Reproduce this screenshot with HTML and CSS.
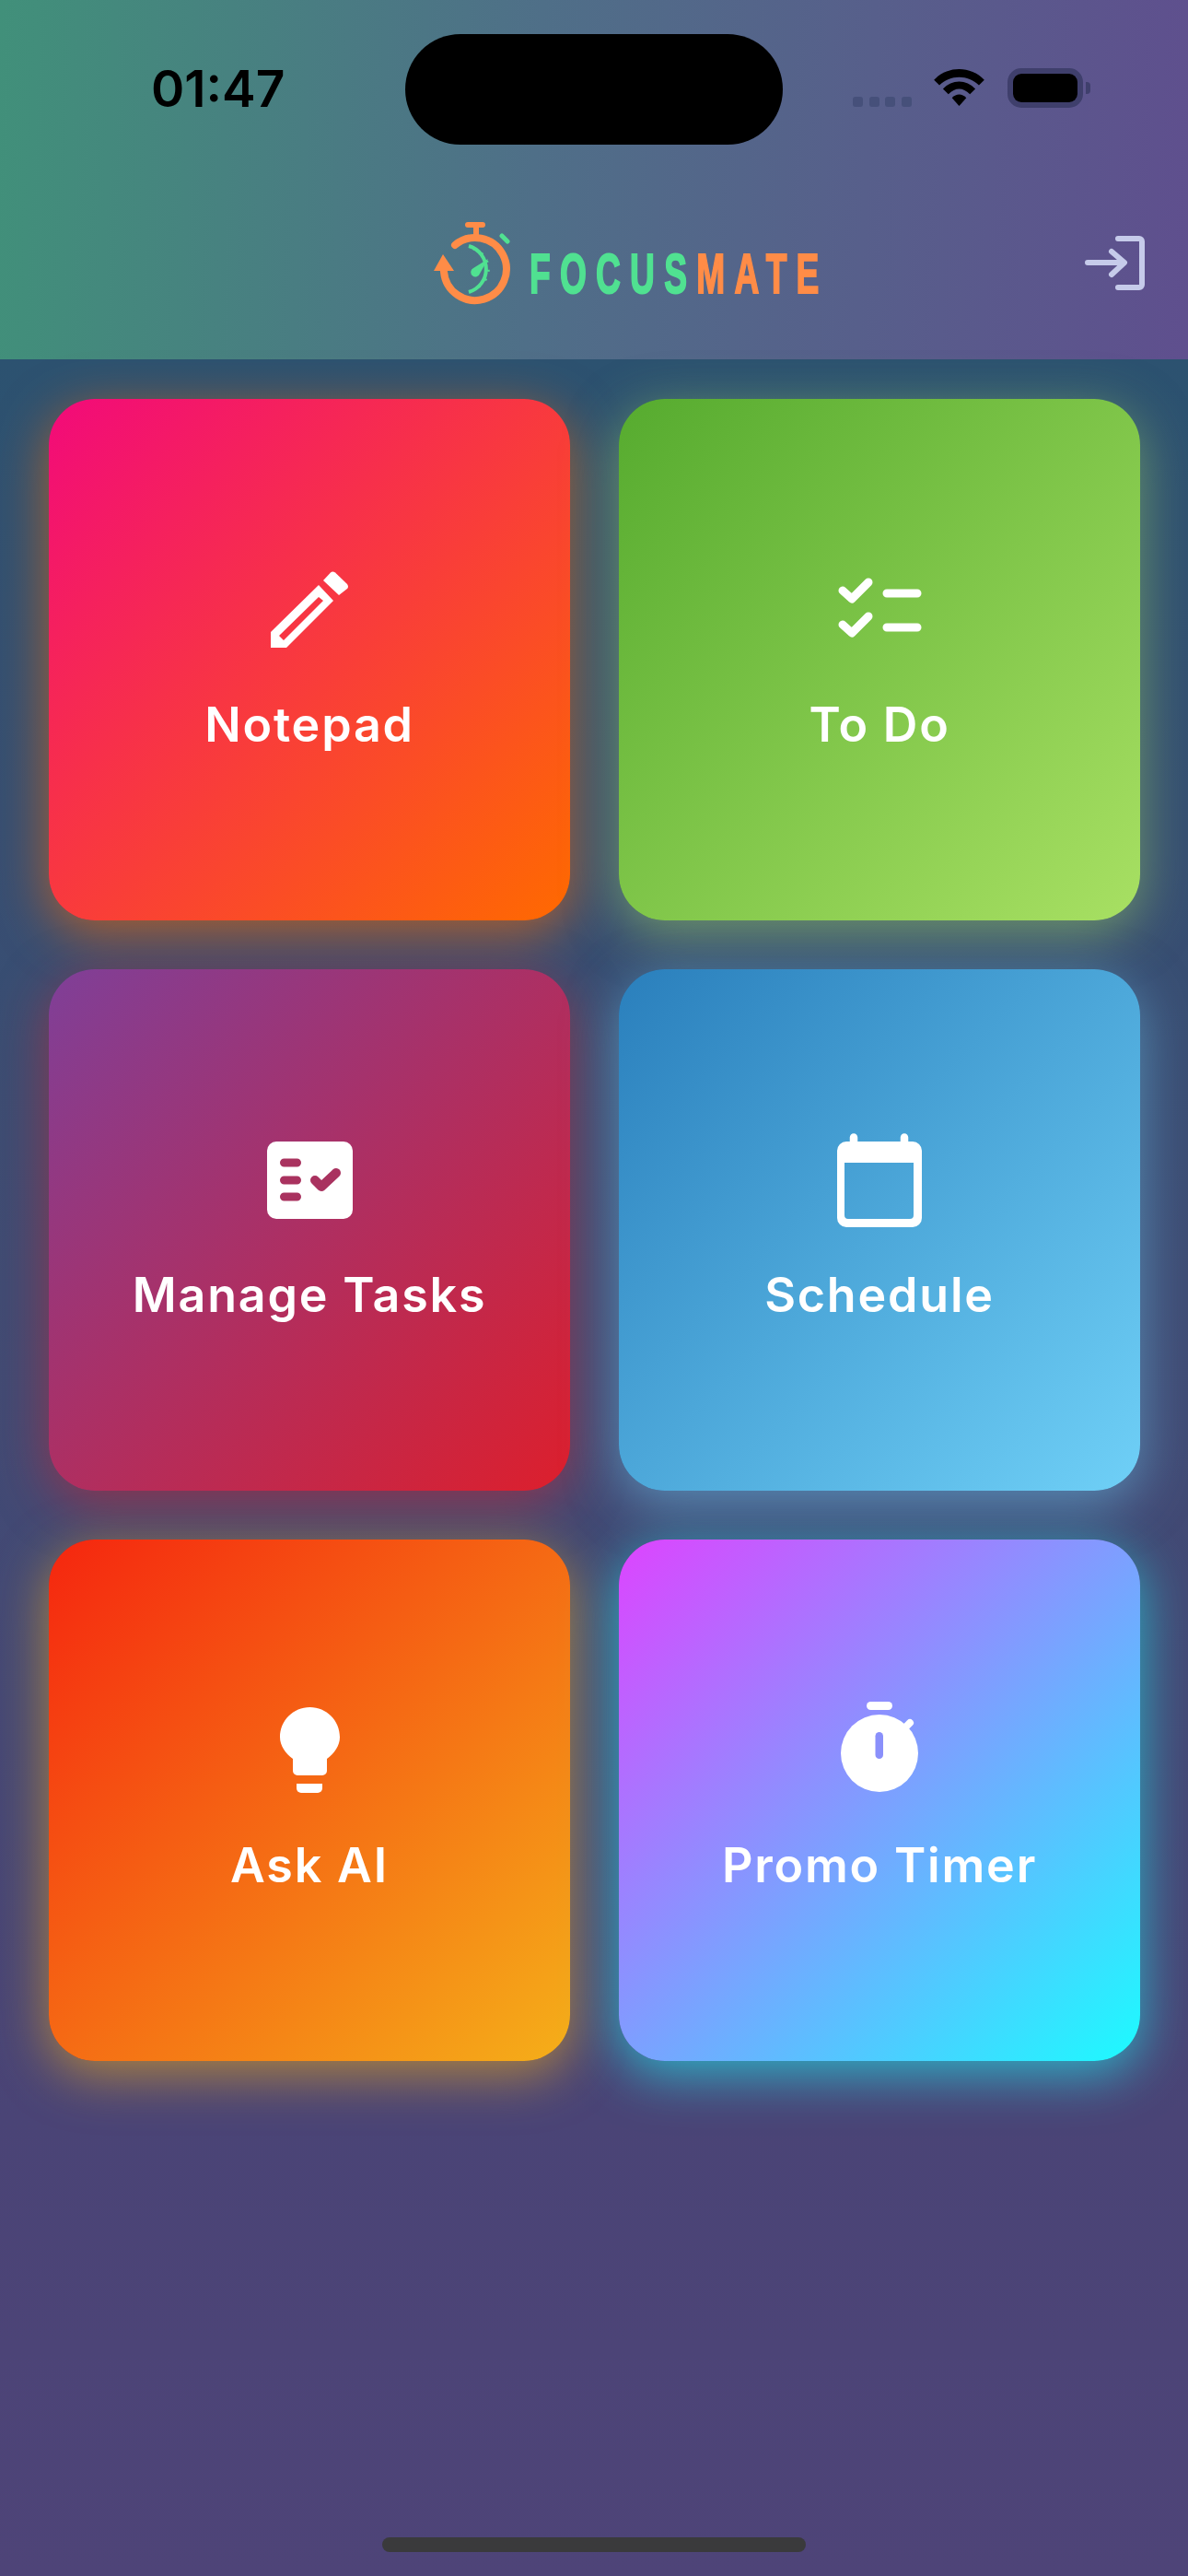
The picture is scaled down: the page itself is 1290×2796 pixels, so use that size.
FILE: index.html
```html
<!DOCTYPE html>
<html lang="en">
<head>
    <meta charset="UTF-8">
    <meta name="viewport" content="width=device-width, initial-scale=1.0">
    <title>FocusMate</title>
    <link rel="stylesheet" href="styles.css">
</head>
<body>
    <div class="screen">
        <div class="header">
            <div class="status-bar">
                <span class="time">01:47</span>
                <div class="island"></div>
                <div class="status-icons">
                    <div class="signal"><span></span><span></span><span></span><span></span></div>
                    <svg class="wifi" width="55" height="41" viewBox="0 0 56 42">
                        <path d="M0 12 C15 -4 41 -4 56 12 L50 18 C38 6 18 6 6 18 Z" fill="#000"/>
                        <path d="M10 22 C20 11 36 11 46 22 L40 28 C32 20 24 20 16 28 Z" fill="#000"/>
                        <path d="M20 32 C25 27 31 27 36 32 L28 41 Z" fill="#000"/>
                    </svg>
                    <div class="battery"><div class="battery-fill"></div></div>
                    <div class="battery-cap"></div>
                </div>
            </div>
            <div class="title-bar">
                <div class="logo">
                    <svg class="logo-mark" width="84" height="90" viewBox="0 0 84 90">
                        <!-- orange ring, crown and arrow -->
                        <path d="M23 25 A34 34 0 1 1 11 54" fill="none" stroke="#ff8c47" stroke-width="8" stroke-linecap="round"/>
                        <path d="M10 35 L22 53 L0 53 Z" fill="#ff8c47"/>
                        <path d="M37 3 H53" stroke="#ff8c47" stroke-width="6" stroke-linecap="round"/>
                        <path d="M46 5 V15" stroke="#ff8c47" stroke-width="6"/>
                        <path d="M74 15 L80 21" stroke="#50e191" stroke-width="5" stroke-linecap="round"/>
                        <!-- inner dial -->
                        <path d="M38 26 A26 26 0 0 1 38 76" fill="none" stroke="#50e191" stroke-width="4"/>
                        <path d="M43 29 A23 23 0 0 1 43 73" fill="none" stroke="#50e191" stroke-width="3" stroke-dasharray="2 8"/>
                        <path d="M59 40 L50 56 A5 5 0 1 1 43 50 Z" fill="#50e191"/>
                    </svg>
                    <div class="logo-text"><span class="green">FOCUS</span><span class="orange">MATE</span></div>
                </div>
                <svg class="login-icon" width="65" height="59" viewBox="0 0 65 59">
                    <path d="M36 3 H59 A3 3 0 0 1 62 6 V53 A3 3 0 0 1 59 56 H36" fill="none" stroke="#c6cbea" stroke-width="6" stroke-linecap="round" stroke-linejoin="round"/>
                    <path d="M3 29 H42 M29 17 L43 29 L29 42" fill="none" stroke="#c6cbea" stroke-width="6" stroke-linecap="round" stroke-linejoin="round"/>
                </svg>
            </div>
        </div>

        <div class="grid">
            <div class="card notepad">
                <div class="icon-slot">
                    <svg width="84" height="84" viewBox="0 0 84 84">
                        <path d="M57 10 L65 1.500 Q67 -0.500 70 1.500 L83 14 Q85 17 83 19 L74 26 Z" fill="#fff"/>
                        <path fill-rule="evenodd" d="M52 15 L68 32 L17 83 L0 83 L0 66 Z M52 28 L9 70 L14 75 L57 32 Z" fill="#fff"/>
                    </svg>
                </div>
                <span class="label">Notepad</span>
            </div>
            <div class="card todo">
                <div class="icon-slot">
                    <svg width="90" height="70" viewBox="0 0 90 70">
                        <path d="M5 14 L15 23 L33 5 M5 51 L15 60 L33 42" fill="none" stroke="#fff" stroke-width="9" stroke-linecap="round" stroke-linejoin="round"/>
                        <path d="M53 17 H86 M53 54 H86" fill="none" stroke="#fff" stroke-width="9" stroke-linecap="round"/>
                    </svg>
                </div>
                <span class="label">To Do</span>
            </div>
            <div class="card tasks">
                <div class="icon-slot">
                    <svg width="93" height="84" viewBox="0 0 93 84">
                        <rect width="93" height="84" rx="10" fill="#fff"/>
                        <path d="M18.500 23 H32.500 M18.500 42 H32.500 M18.500 60 H32.500" stroke="#a9325f" stroke-width="9" stroke-linecap="round"/>
                        <path d="M52 42 L59 49 L75 34" fill="none" stroke="#a9325f" stroke-width="10" stroke-linecap="round" stroke-linejoin="round"/>
                    </svg>
                </div>
                <span class="label">Manage Tasks</span>
            </div>
            <div class="card schedule">
                <div class="icon-slot">
                    <svg width="92" height="102" viewBox="0 0 92 102">
                        <path d="M18 12 V4.500 M73 12 V4.500" stroke="#fff" stroke-width="8.500" stroke-linecap="round"/>
                        <path fill-rule="evenodd" d="M10 9 H82 A10 10 0 0 1 92 19 V92 A10 10 0 0 1 82 102 H10 A10 10 0 0 1 0 92 V19 A10 10 0 0 1 10 9 Z M8 32 V89 A4 4 0 0 0 12 93 H79 A4 4 0 0 0 83 89 V32 Z" fill="#fff"/>
                    </svg>
                </div>
                <span class="label">Schedule</span>
            </div>
            <div class="card askai">
                <div class="icon-slot">
                    <svg width="65" height="94" viewBox="0 0 65 94">
                        <path d="M32.500 0 C50.500 0 65 14.500 65 32.500 C65 42 59 50 51 56 V69 A5 5 0 0 1 46 74 H19 A5 5 0 0 1 14 69 V56 C6 50 0 42 0 32.500 C0 14.500 14.500 0 32.500 0 Z" fill="#fff"/>
                        <path d="M18 83 H46 V88 A5 5 0 0 1 41 93 H23 A5 5 0 0 1 18 88 Z" fill="#fff"/>
                    </svg>
                </div>
                <span class="label">Ask AI</span>
            </div>
            <div class="card timer">
                <div class="icon-slot">
                    <svg width="84" height="106" viewBox="0 0 84 106">
                        <rect x="28" y="0" width="28" height="9" rx="4.500" fill="#fff"/>
                        <path d="M68 30 L75 23" stroke="#fff" stroke-width="8" stroke-linecap="round"/>
                        <circle cx="42" cy="56" r="42" fill="#fff"/>
                        <rect x="37.500" y="33" width="8.500" height="29" rx="4.250" fill="#8a90fb"/>
                    </svg>
                </div>
                <span class="label">Promo Timer</span>
            </div>
        </div>

        <div class="home-indicator"></div>
    </div>
</body>
</html>
```

FILE: styles.css
```css
html, body {
    margin: 0;
    padding: 0;
}

body {
    font-family: Inter, "Noto Sans", sans-serif;
}

.screen {
    width: 1290px;
    height: 2796px;
    position: relative;
    overflow: hidden;
    background: linear-gradient(180deg, #2c5270 390px, #3f4c74 1400px, #4a4476 2300px, #4e4478 100%);
}

/* header */
.header {
    height: 390px;
    background: linear-gradient(93deg, #41907a 0%, #4f6f88 45%, #5f4f8e 100%);
}

.status-bar {
    height: 194px;
    position: relative;
}

.time {
    position: absolute;
    left: 164px;
    top: 62px;
    font-size: 55px;
    font-weight: 600;
    line-height: 68px;
    color: #000;
}

.island {
    position: absolute;
    left: 440px;
    top: 37px;
    width: 410px;
    height: 120px;
    border-radius: 60px;
    background: #000;
}

.status-icons {
    position: absolute;
    left: 926px;
    top: 74px;
    display: flex;
    align-items: flex-end;
}

.signal {
    display: flex;
    gap: 6.5px;
    margin-right: 24px;
    margin-bottom: 1px;
}

.signal span {
    width: 11px;
    height: 11px;
    border-radius: 3px;
    background: #46507a;
}

.wifi {
    margin-right: 25px;
    margin-bottom: 1px;
}

.battery {
    width: 82px;
    height: 43px;
    box-sizing: border-box;
    border: 6px solid #3f3f6c;
    border-radius: 15px;
}

.battery-fill {
    width: 100%;
    height: 100%;
    border-radius: 9px;
    background: #000;
}

.battery-cap {
    width: 5px;
    height: 13px;
    margin: 0 0 15px 3px;
    border-radius: 0 4px 4px 0;
    background: #3f3f6c;
}

.title-bar {
    position: relative;
    height: 196px;
}

.logo {
    display: flex;
    align-items: flex-start;
    gap: 20px;
    padding: 47px 0 0 471px;
}

.logo-text {
    width: 313px;
    margin-top: 25px;
    line-height: 62px;
    font-family: "Liberation Sans", sans-serif;
    font-size: 62px;
    font-weight: 700;
    letter-spacing: 17px;
    white-space: nowrap;
    -webkit-text-stroke: 2px currentColor;
    transform: scaleX(0.6);
    transform-origin: left center;
}

.green {
    color: #50e191;
}

.orange {
    color: #ff8c47;
}

.login-icon {
    position: absolute;
    left: 1178px;
    top: 62px;
}

/* cards */
.grid {
    display: grid;
    grid-template-columns: 566px 566px;
    grid-auto-rows: 566px;
    gap: 53px;
    padding: 43px 53px 0;
}

.card {
    display: flex;
    flex-direction: column;
    align-items: center;
    padding-top: 171px;
    box-sizing: border-box;
    border-radius: 50px;
}

.icon-slot {
    height: 116px;
    margin-bottom: 37px;
    display: flex;
    align-items: center;
}

.icon-slot svg {
    overflow: visible;
}

.label {
    font-size: 52px;
    font-weight: 600;
    line-height: 60px;
    letter-spacing: 1.8px;
    color: #fff;
}

.notepad {
    background: linear-gradient(135deg, #f20a7a, #ff6a00);
    box-shadow: 0 14px 56px rgba(255, 106, 0, 0.6);
}

.todo {
    background: linear-gradient(135deg, #56ab2f, #a8e063);
    box-shadow: 0 14px 56px rgba(168, 224, 99, 0.5);
}

.tasks {
    background: linear-gradient(135deg, #7f3f98, #dd1f2c);
    box-shadow: 0 14px 56px rgba(224, 32, 42, 0.5);
}

.schedule {
    background: linear-gradient(135deg, #2a7fbc, #6fd0f7);
    box-shadow: 0 14px 56px rgba(111, 208, 247, 0.5);
}

.askai {
    background: linear-gradient(135deg, #f5260f, #f5af19);
    box-shadow: 0 14px 56px rgba(245, 175, 25, 0.6);
}

.timer {
    background: linear-gradient(135deg, #dd44ff, #1cfbff);
    box-shadow: 0 14px 56px rgba(28, 251, 255, 0.6);
}

.home-indicator {
    position: absolute;
    left: 415px;
    bottom: 26px;
    width: 460px;
    height: 16px;
    border-radius: 8px;
    background: #3a3a3c;
}
```
